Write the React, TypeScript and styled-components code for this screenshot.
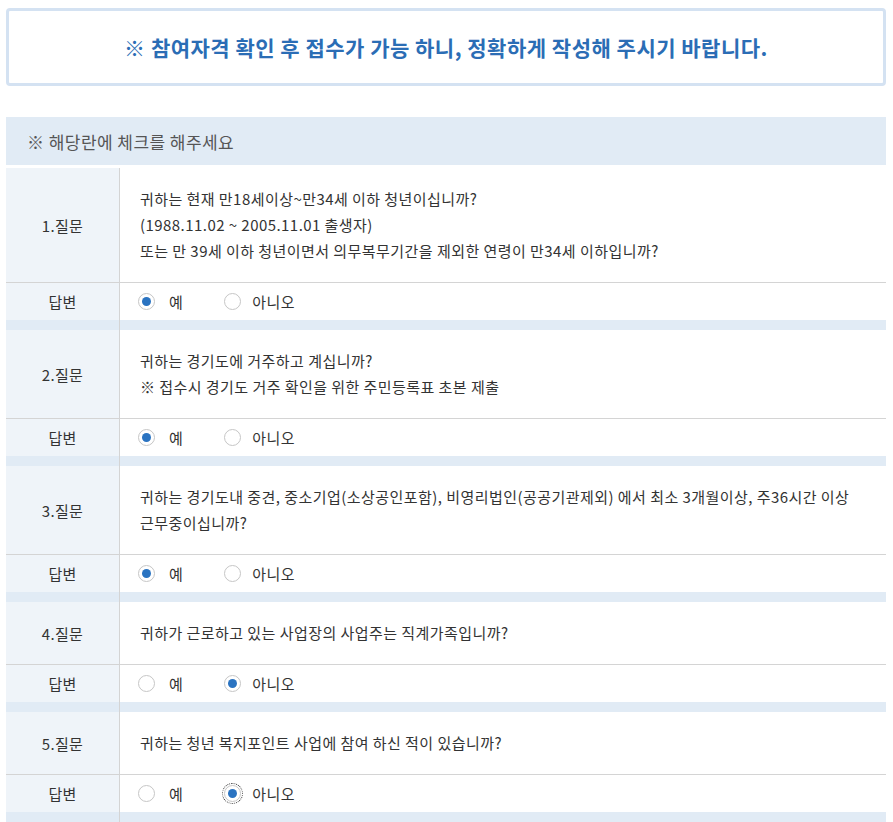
import styled, { createGlobalStyle } from 'styled-components';

const GlobalStyle = createGlobalStyle`
  body {
    margin: 0;
    background: #fff;
    font-family: "Noto Sans CJK KR", "Noto Sans", sans-serif;
    color: #333;
  }
`;

interface Question {
  lines: string[];
  answer: 'yes' | 'no';
  focused?: boolean;
}

const questions: Question[] = [
  {
    lines: [
      '귀하는 현재 만18세이상~만34세 이하 청년이십니까?',
      '(1988.11.02 ~ 2005.11.01 출생자)',
      '또는 만 39세 이하 청년이면서 의무복무기간을 제외한 연령이 만34세 이하입니까?',
    ],
    answer: 'yes',
  },
  {
    lines: ['귀하는 경기도에 거주하고 계십니까?', '※ 접수시 경기도 거주 확인을 위한 주민등록표 초본 제출'],
    answer: 'yes',
  },
  {
    lines: [
      '귀하는 경기도내 중견, 중소기업(소상공인포함), 비영리법인(공공기관제외) 에서 최소 3개월이상, 주36시간 이상 근무중이십니까?',
    ],
    answer: 'yes',
  },
  {
    lines: ['귀하가 근로하고 있는 사업장의 사업주는 직계가족입니까?'],
    answer: 'no',
  },
  {
    lines: ['귀하는 청년 복지포인트 사업에 참여 하신 적이 있습니까?'],
    answer: 'no',
    focused: true,
  },
];

const App = () => {
  return (
    <Page>
      <GlobalStyle />
      <Notice>※ 참여자격 확인 후 접수가 가능 하니, 정확하게 작성해 주시기 바랍니다.</Notice>
      <Caption>※ 해당란에 체크를 해주세요</Caption>
      <Table>
        {questions.map((q, i) => (
          <Group key={i}>
            <Row>
              <Head>{i + 1}.질문</Head>
              <Body $question>
                {q.lines.map((line, j) => (
                  <div key={j}>{line}</div>
                ))}
              </Body>
            </Row>
            <Row $answer>
              <Head>답변</Head>
              <Body>
                <Option>
                  <Radio $checked={q.answer === 'yes'} />
                  예
                </Option>
                <Option $narrow>
                  <Radio $checked={q.answer === 'no'} $focused={q.focused} />
                  아니오
                </Option>
              </Body>
            </Row>
            <Spacer>
              <SpacerHead />
              <div />
            </Spacer>
          </Group>
        ))}
      </Table>
    </Page>
  );
};

const Page = styled.div`
  width: 880px;
  padding: 8px 7px 0 6px;
`;

const Notice = styled.div`
  height: 72px;
  border: 3px solid #d4e2f2;
  border-radius: 4px;
  display: flex;
  align-items: center;
  justify-content: center;
  font-size: 21px;
  font-weight: 700;
  color: #2b6db5;
  letter-spacing: 0.5px;
`;

const Caption = styled.div`
  margin-top: 31px;
  height: 48px;
  background: #e1ebf5;
  display: flex;
  align-items: center;
  padding-left: 21px;
  font-size: 17px;
  letter-spacing: 0.45px;
  color: #555;
`;

const Table = styled.div`
  margin-top: 3px;
`;

const Group = styled.div``;

const Row = styled.div<{ $answer?: boolean }>`
  display: grid;
  grid-template-columns: 114px 1fr;
  border-top: ${({ $answer }) => ($answer ? '1px solid #d4d4d4' : 'none')};
  min-height: ${({ $answer }) => ($answer ? '37px' : '0')};
`;

const Head = styled.div`
  background: #eff4f9;
  border-right: 1px solid #d4d4d4;
  display: flex;
  align-items: center;
  justify-content: center;
  font-size: 15px;
  letter-spacing: 0.3px;
  color: #333;
`;

const Body = styled.div<{ $question?: boolean }>`
  padding: ${({ $question }) => ($question ? '18px 20px' : '0 18px')};
  display: flex;
  flex-direction: ${({ $question }) => ($question ? 'column' : 'row')};
  justify-content: ${({ $question }) => ($question ? 'center' : 'flex-start')};
  align-items: ${({ $question }) => ($question ? 'flex-start' : 'center')};
  font-size: 15px;
  letter-spacing: 0.45px;
  line-height: 26px;
  word-break: keep-all;
  color: #333;
`;

const Option = styled.label<{ $narrow?: boolean }>`
  display: flex;
  align-items: center;
  gap: ${({ $narrow }) => ($narrow ? '11px' : '14px')};
  margin-right: 41px;
`;

const Radio = styled.span<{ $checked: boolean; $focused?: boolean }>`
  position: relative;
  width: 15px;
  height: 15px;
  border: 1px solid #c6c6c6;
  border-radius: 50%;
  background: #fff;
  outline: ${({ $focused }) => ($focused ? '1px dotted #333' : 'none')};
  outline-offset: 1px;

  &::after {
    content: '';
    display: ${({ $checked }) => ($checked ? 'block' : 'none')};
    position: absolute;
    left: 3px;
    top: 3px;
    width: 9px;
    height: 9px;
    border-radius: 50%;
    background: #2a73c1;
  }
`;

const Spacer = styled.div`
  display: grid;
  grid-template-columns: 114px 1fr;
  height: 10px;
  background: #e1ebf5;
`;

const SpacerHead = styled.div`
  border-right: 1px solid #d4d4d4;
`;

export default App;
